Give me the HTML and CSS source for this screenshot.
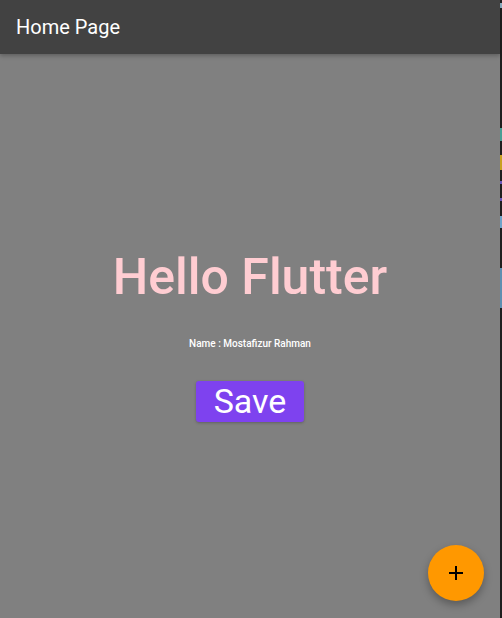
FILE: index.html
```html
<!DOCTYPE html>
<html>
<head>
<meta charset="utf-8">
<link rel="stylesheet" href="styles.css">
</head>
<body>
<div class="screen">
  <div class="app">
    <header class="appbar"><span class="title">Home Page</span></header>
    <main class="content">
      <h1 class="hello">Hello Flutter</h1>
      <p class="name">Name : Mostafizur Rahman</p>
      <button class="save">Save</button>
    </main>
    <button class="fab" aria-label="add">
      <svg width="24" height="24" viewBox="0 0 24 24"><path d="M19 13h-6v6h-2v-6H5v-2h6V5h2v6h6v2z" fill="#000"/></svg>
    </button>
  </div>
  <div class="strip">
    <span class="mark m1"></span>
    <span class="mark m2"></span>
    <span class="mark m3"></span>
    <span class="mark m4"></span>
    <span class="mark m5"></span>
    <span class="mark m6"></span>
    <span class="mark m7"></span>
  </div>
</div>
</body>
</html>
```

FILE: styles.css
```css
* { box-sizing: border-box; }
html, body { margin: 0; padding: 0; }
body {
  width: 502px;
  height: 618px;
  overflow: hidden;
  font-family: Roboto, "Liberation Sans", sans-serif;
  background: #808080;
}
.screen {
  display: flex;
  width: 502px;
  height: 618px;
}
.app {
  position: relative;
  width: 500px;
  height: 618px;
  display: flex;
  flex-direction: column;
  background: #808080;
}
.appbar {
  height: 54px;
  flex: none;
  background: #424242;
  padding-left: 16px;
  box-shadow: 0 2px 4px rgba(0,0,0,0.25);
  position: relative;
  z-index: 1;
}
.title {
  font-size: 20px;
  line-height: 54px;
  color: #ffffff;
  font-weight: 400;
}
.content {
  flex: 1;
  display: flex;
  flex-direction: column;
  align-items: center;
  justify-content: center;
}
.hello {
  margin: 1.5px 0 0;
  font-size: 50px;
  line-height: 50px;
  font-weight: 500;
  color: #ffcdd2;
}
.name {
  margin: 37.2px 0 0;
  font-size: 10px;
  line-height: 10px;
  font-weight: 500;
  color: #ffffff;
}
.save {
  margin-top: 32.3px;
  width: 108px;
  height: 41px;
  border: none;
  border-radius: 3px;
  background: #7e42ef;
  color: #ffffff;
  font-family: Roboto, "Liberation Sans", sans-serif;
  font-size: 34px;
  line-height: 41px;
  padding: 0;
  box-shadow: 0 1px 3px rgba(0,0,0,0.25);
}
.fab {
  position: absolute;
  right: 16px;
  bottom: 17px;
  width: 56px;
  height: 56px;
  border-radius: 50%;
  border: none;
  padding: 0;
  background: #ff9800;
  display: flex;
  align-items: center;
  justify-content: center;
  box-shadow: 0 4px 8px rgba(0,0,0,0.3);
}
.strip {
  width: 2px;
  height: 618px;
  background: #1f1f1f;
  display: flex;
  flex-direction: column;
}
.mark { display: block; width: 2px; flex: none; }
.m1 { margin-top: 3px; height: 5px; background: #8fb4c8; }
.m2 { margin-top: 120px; height: 13px; background: #4a9e94; }
.m3 { margin-top: 14px; height: 15px; background: #c8a020; }
.m4 { margin-top: 11px; height: 3px; background: #6a58b8; }
.m5 { margin-top: 14px; height: 3px; background: #6a58b8; }
.m6 { margin-top: 15px; height: 12px; background: #6fa3c8; }
.m7 { margin-top: 40px; height: 40px; background: #5f8fb0; }
```
